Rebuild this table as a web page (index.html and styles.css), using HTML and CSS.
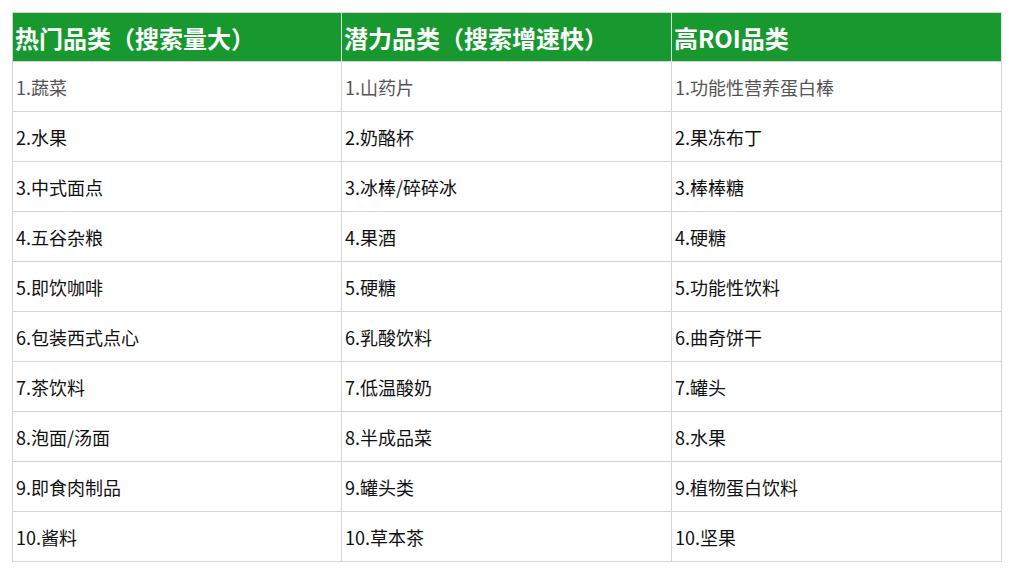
FILE: index.html
```html
<!DOCTYPE html>
<html lang="zh-CN">
<head>
<meta charset="utf-8">
<title>品类表</title>
<link rel="stylesheet" href="styles.css">
</head>
<body>
<div class="table">
  <div class="cell head">热门品类（搜索量大）</div>
  <div class="cell head">潜力品类（搜索增速快）</div>
  <div class="cell head">高ROI品类</div>

  <div class="cell first">1.蔬菜</div>
  <div class="cell first">1.山药片</div>
  <div class="cell first">1.功能性营养蛋白棒</div>

  <div class="cell">2.水果</div>
  <div class="cell">2.奶酪杯</div>
  <div class="cell">2.果冻布丁</div>

  <div class="cell">3.中式面点</div>
  <div class="cell">3.冰棒/碎碎冰</div>
  <div class="cell">3.棒棒糖</div>

  <div class="cell">4.五谷杂粮</div>
  <div class="cell">4.果酒</div>
  <div class="cell">4.硬糖</div>

  <div class="cell">5.即饮咖啡</div>
  <div class="cell">5.硬糖</div>
  <div class="cell">5.功能性饮料</div>

  <div class="cell">6.包装西式点心</div>
  <div class="cell">6.乳酸饮料</div>
  <div class="cell">6.曲奇饼干</div>

  <div class="cell">7.茶饮料</div>
  <div class="cell">7.低温酸奶</div>
  <div class="cell">7.罐头</div>

  <div class="cell">8.泡面/汤面</div>
  <div class="cell">8.半成品菜</div>
  <div class="cell">8.水果</div>

  <div class="cell">9.即食肉制品</div>
  <div class="cell">9.罐头类</div>
  <div class="cell">9.植物蛋白饮料</div>

  <div class="cell">10.酱料</div>
  <div class="cell">10.草本茶</div>
  <div class="cell">10.坚果</div>
</div>
</body>
</html>
```

FILE: styles.css
```css
html, body {
  margin: 0;
  padding: 0;
  background: #ffffff;
}

body {
  padding: 12px;
  font-family: "Noto Sans CJK SC", "Noto Sans", sans-serif;
}

.table {
  display: grid;
  grid-template-columns: 329px 330px 330px;
  grid-template-rows: 49px repeat(10, 50px);
  width: max-content;
  border-top: 1px solid #d4d4d4;
  border-left: 1px solid #d4d4d4;
}

.cell {
  box-sizing: border-box;
  border-right: 1px solid #d4d4d4;
  border-bottom: 1px solid #d4d4d4;
  display: flex;
  align-items: center;
  padding-left: 3px;
  font-size: 18px;
  color: #111111;
  white-space: nowrap;
}

.cell.first {
  color: #555555;
}

.cell.head {
  background: #17992f;
  color: #ffffff;
  font-size: 24px;
  font-weight: 700;
  padding-left: 2px;
  border-right-color: #d7e8d8;
}
```
